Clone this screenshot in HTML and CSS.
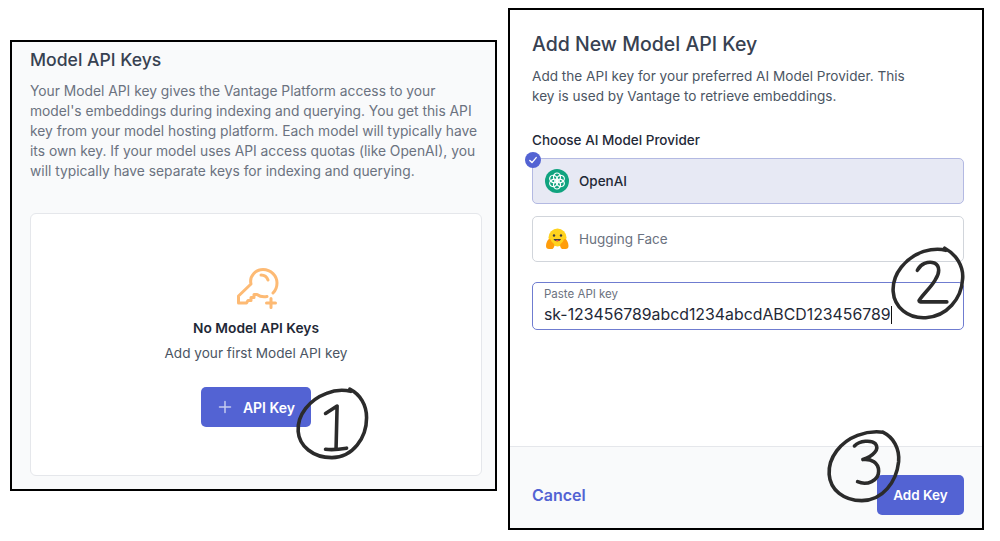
FILE: index.html
```html
<!DOCTYPE html>
<html lang="en">
<head>
    <meta charset="UTF-8">
    <title>Model API Keys</title>
    <link rel="stylesheet" href="styles.css">
</head>
<body>
    <div class="panel panel-left">
        <h2 class="title title-small">Model API Keys</h2>
        <p class="intro">Your Model API key gives the Vantage Platform access to your model's embeddings during indexing and querying. You get this API key from your model hosting platform. Each model will typically have its own key. If your model uses API access quotas (like OpenAI), you will typically have separate keys for indexing and querying.</p>
        <div class="empty-card">
            <svg class="key-icon" width="44" height="44" viewBox="0 0 44 44" fill="none" stroke="#fdba74" stroke-width="3" stroke-linecap="round" stroke-linejoin="round">
                <path d="M33 32.500C28 33.500 25 32 23 30.500H20V33.500H17V36.500H14L12.500 39H4.500V32L17 20C15 12 22 5.500 29 5.500C37 5.500 43 12 43 19C43 23 41.500 26.500 39 29"/>
                <path d="M27 11c3 0 6 2 7 5"/>
                <path d="M37 34.500v9M32.500 39h9"/>
            </svg>
            <div class="empty-title">No Model API Keys</div>
            <div class="empty-text">Add your first Model API key</div>
            <button class="btn btn-add">
                <svg width="14" height="14" viewBox="0 0 14 14" stroke="#c5cbf0" stroke-width="1.500" stroke-linecap="round"><path d="M7 1.500v11M1.500 7h11"/></svg>
                <span>API Key</span>
            </button>
        </div>
    </div>

    <div class="panel panel-right">
        <div class="form-body">
            <h2 class="title title-large">Add New Model API Key</h2>
            <p class="form-intro">Add the API key for your preferred AI Model Provider. This key is used by Vantage to retrieve embeddings.</p>
            <div class="field-label">Choose AI Model Provider</div>
            <div class="provider provider-on">
                <span class="check">
                    <svg width="10" height="10" viewBox="0 0 10 10" fill="none" stroke="#fff" stroke-width="1.400" stroke-linecap="round" stroke-linejoin="round"><path d="M1.800 5.400l2.200 2.200 4.200-5"/></svg>
                </span>
                <svg class="logo" width="24" height="24" viewBox="0 0 24 24" fill="none">
                    <circle cx="12" cy="12" r="12" fill="#10a37f"/>
                    <g stroke="#fff" stroke-width="1.200" fill="none">
                        <ellipse cx="12" cy="8.200" rx="3.500" ry="4.200"/>
                        <ellipse cx="12" cy="8.200" rx="3.500" ry="4.200" transform="rotate(60 12 12)"/>
                        <ellipse cx="12" cy="8.200" rx="3.500" ry="4.200" transform="rotate(120 12 12)"/>
                        <ellipse cx="12" cy="8.200" rx="3.500" ry="4.200" transform="rotate(180 12 12)"/>
                        <ellipse cx="12" cy="8.200" rx="3.500" ry="4.200" transform="rotate(240 12 12)"/>
                        <ellipse cx="12" cy="8.200" rx="3.500" ry="4.200" transform="rotate(300 12 12)"/>
                    </g>
                </svg>
                <span>OpenAI</span>
            </div>
            <div class="provider">
                <svg class="logo" width="24" height="24" viewBox="0 0 24 24">
                    <circle cx="12.500" cy="10.500" r="9" fill="#ffd21e"/>
                    <path d="M1 19c0-3 1.500-6 3-7 1.500-.5 2 1 2.500 2.500L9 17c1 1.500 0 4-1.500 5H4c-2 0-3-1-3-3z" fill="#ff9d0b"/>
                    <path d="M23.500 19c0-3-1.500-6-3-7-1.500-.5-2 1-2.500 2.500L15.500 17c-1 1.500 0 4 1.500 5h3.500c2 0 3-1 3-3z" fill="#ff9d0b"/>
                    <circle cx="9" cy="8.500" r="1.200" fill="#3a3b45"/>
                    <circle cx="16" cy="8.500" r="1.200" fill="#3a3b45"/>
                    <path d="M8.500 12c1 3 6.500 3 7.500 0z" fill="#3a3b45"/>
                    <path d="M10.500 13.800c1 .7 2.500.7 3.500 0l-1.700-1z" fill="#ef4e4e"/>
                </svg>
                <span>Hugging Face</span>
            </div>
            <div class="key-input">
                <div class="key-label">Paste API key</div>
                <div class="key-value">sk-123456789abcd1234abcdABCD123456789<span class="caret"></span></div>
            </div>
        </div>
        <div class="form-footer">
            <a class="cancel">Cancel</a>
            <button class="btn btn-submit">Add Key</button>
        </div>
    </div>

    <!-- hand drawn annotations -->
    <svg class="scribble scribble-1" width="80" height="80" viewBox="0 0 76 76" fill="none" stroke="#2b2b2b" stroke-width="3.400" stroke-linecap="round" stroke-linejoin="round">
        <path d="M52 4c10 5 16 15 16 27 0 19-13 38-33 38C17 69 4 58 3 44 2 28 14 14 30 8c7-3 15-4 23-2"/>
        <path d="M29 27l11-7-1 41"/>
        <path d="M29 61c7 1 14 0 20-1"/>
    </svg>
    <svg class="scribble scribble-2" width="80" height="80" viewBox="0 0 76 76" fill="none" stroke="#2b2b2b" stroke-width="3.400" stroke-linecap="round" stroke-linejoin="round">
        <path d="M52 4c11 6 18 17 17 29-1 19-15 36-35 37C17 71 4 60 3 45 2 28 15 13 32 7c7-2 14-3 21-1"/>
        <path d="M26 25c3-6 10-9 16-7 6 3 5 10 1 16-4 7-10 12-15 19-1 1 0 2 1 2 9 0 17 0 25 0"/>
    </svg>
    <svg class="scribble scribble-3" width="80" height="80" viewBox="0 0 76 76" fill="none" stroke="#2b2b2b" stroke-width="3.400" stroke-linecap="round" stroke-linejoin="round">
        <path d="M54 4c10 5 16 15 15 28-2 19-15 37-35 37C17 69 4 59 3 44 2 28 14 13 30 7c8-3 16-4 24-3"/>
        <path d="M27 17c5-5 16-6 20-2 4 5-2 12-12 15 8-1 15 3 15 11 0 9-11 14-20 10"/>
    </svg>
</body>
</html>
```

FILE: styles.css
```css
* {
    box-sizing: border-box;
}

body {
    margin: 0;
    background: #fff;
    font-family: Inter, 'Noto Sans', sans-serif;
    color: #374151;
    width: 1000px;
    height: 541px;
    position: relative;
    overflow: hidden;
}

.panel {
    position: absolute;
    border: 2px solid #000;
}

.panel-left {
    left: 10px;
    top: 40px;
    width: 487px;
    height: 451px;
    background: #f9fafb;
    padding: 6px 13px 0 18px;
}

.panel-right {
    left: 508px;
    top: 8px;
    width: 476px;
    height: 522px;
    background: #fff;
    display: flex;
    flex-direction: column;
}

.title {
    margin: 0;
    line-height: 24px;
    font-weight: 500;
    color: #374151;
}

.title-small {
    font-size: 17.600px;
}

.title-large {
    font-size: 19.500px;
}

.intro {
    margin: 9px 0 0;
    font-size: 13.800px;
    line-height: 20px;
    color: #6b7280;
}

.empty-card {
    margin-top: 32px;
    height: 263px;
    background: #fff;
    border: 1px solid #e5e7eb;
    border-radius: 6px;
    display: flex;
    flex-direction: column;
    align-items: center;
    padding-top: 50px;
}

.key-icon {
    overflow: visible;
}

.empty-title {
    margin-top: 10px;
    font-size: 13.750px;
    line-height: 20px;
    font-weight: 600;
    color: #1f2937;
}

.empty-text {
    margin-top: 5px;
    font-size: 13.600px;
    line-height: 20px;
    color: #4b5563;
}

.btn {
    border: none;
    border-radius: 5px;
    background: #5363d3;
    color: #fff;
    font-family: inherit;
    font-size: 13.500px;
    font-weight: 600;
}

.btn-add {
    margin-top: 24px;
    width: 110px;
    height: 40px;
    display: flex;
    align-items: center;
    justify-content: center;
    gap: 11px;
    font-size: 14px;
    padding: 0 0 0 1px;
}

.form-body {
    flex: 1;
    padding: 22px 18px 0 22px;
}

.form-intro {
    margin: 10px 0 0;
    font-size: 13.600px;
    line-height: 20px;
    color: #4b5563;
    width: 385px;
}

.field-label {
    margin-top: 24px;
    font-size: 13.500px;
    line-height: 20px;
    font-weight: 500;
    color: #1f2937;
}

.provider {
    position: relative;
    margin-top: 8px;
    height: 46px;
    border: 1px solid #d1d5db;
    border-radius: 5px;
    display: flex;
    align-items: center;
    gap: 10px;
    padding-left: 12px;
    font-size: 13.500px;
    color: #6b7280;
    background: #fff;
}

.provider + .provider {
    margin-top: 12px;
}

.provider-on {
    margin-top: 8px;
    background: #e7e9f4;
    border-color: #b3b9e2;
    color: #1f2937;
    font-weight: 500;
}

.check {
    position: absolute;
    left: -8px;
    top: -7px;
    width: 16px;
    height: 16px;
    border-radius: 50%;
    background: #5363d3;
    display: flex;
    align-items: center;
    justify-content: center;
}

.key-input {
    margin-top: 20px;
    height: 48px;
    border: 1px solid #6f7cd0;
    border-radius: 5px;
    padding: 5px 11px;
}

.key-label {
    font-size: 11.500px;
    line-height: 13px;
    color: #6b7280;
}

.key-value {
    margin-top: 4px;
    font-size: 15.850px;
    line-height: 20px;
    color: #1f2937;
    white-space: nowrap;
}

.caret {
    display: inline-block;
    width: 1px;
    height: 18px;
    background: #111;
    vertical-align: -4px;
}

.form-footer {
    height: 82px;
    background: #f9fafb;
    border-top: 1px solid #e5e7eb;
    display: flex;
    align-items: flex-end;
    justify-content: space-between;
    padding: 0 18px 13px 22px;
}

.cancel {
    font-size: 16px;
    line-height: 40px;
    font-weight: 600;
    color: #5363d3;
}

.btn-submit {
    width: 87px;
    height: 40px;
}

/* notes drawn over the screenshots */
.scribble {
    position: absolute;
}

.scribble-1 {
    left: 295px;
    top: 385px;
}

.scribble-2 {
    left: 890px;
    top: 244px;
}

.scribble-3 {
    left: 826px;
    top: 428px;
}
```
